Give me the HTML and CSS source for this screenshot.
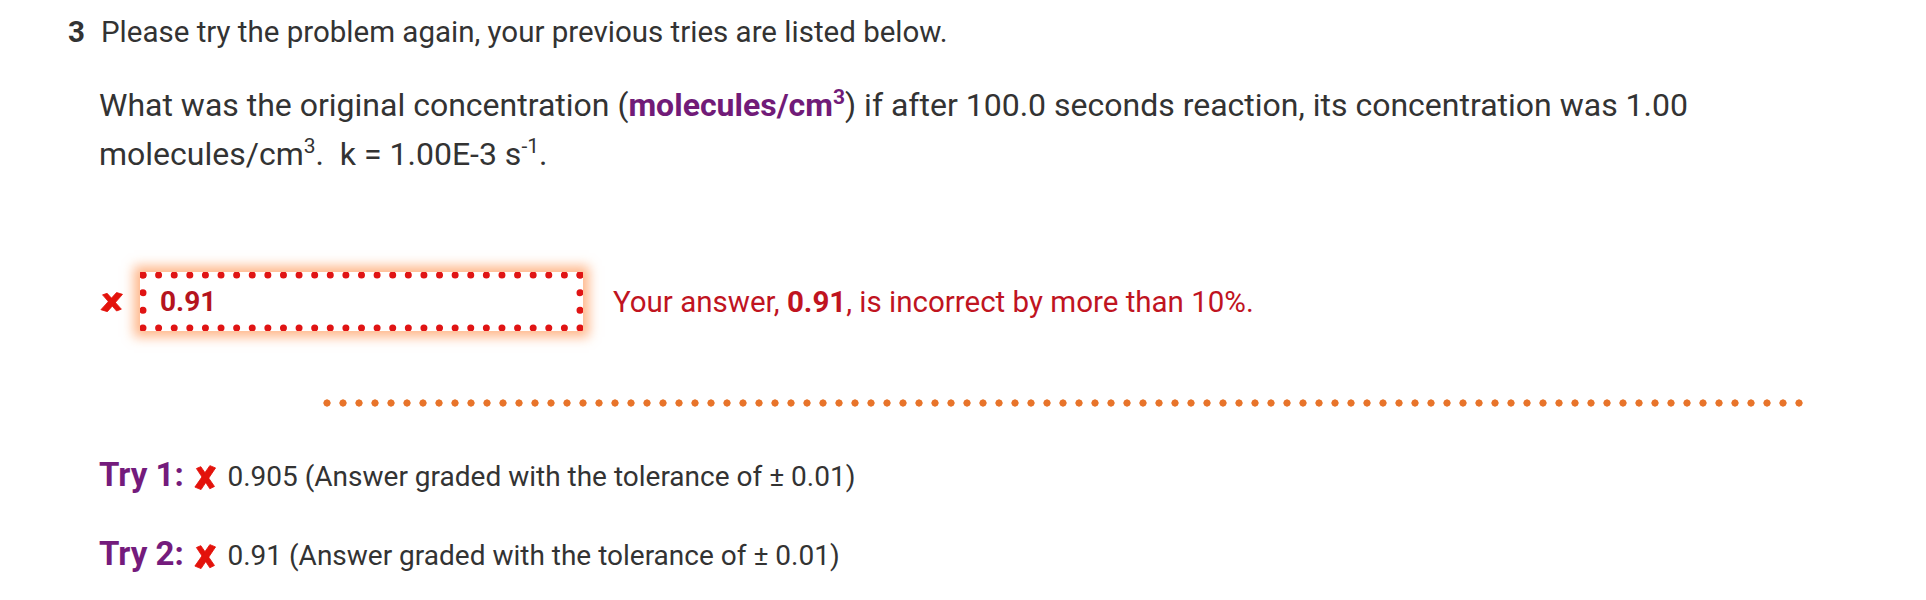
FILE: index.html
```html
<!DOCTYPE html>
<html lang="en">
<head>
<meta charset="utf-8">
<title>Problem 3</title>
<link rel="stylesheet" href="styles.css">
</head>
<body>
<div class="problem">
  <div class="header"><span class="num">3</span><span class="msg">Please try the problem again, your previous tries are listed below.</span></div>
  <div class="question">What was the original concentration (<b class="unit">molecules/cm<sup>3</sup></b>) if after 100.0 seconds reaction, its concentration was 1.00 molecules/cm<sup>3</sup>.&nbsp; k = 1.00E-3 s<sup>-1</sup>.</div>
  <div class="answer-row">
    <svg class="xicon big" width="23" height="20" viewBox="0 0 20 24" preserveAspectRatio="none" aria-hidden="true">
      <path d="M2.2 3.4 L6.2 1.6 L18.6 20.6 L14.4 22.8 Z"/>
      <path d="M14.4 0.6 L19.6 2.8 L6.4 23.6 L0.8 21.2 Z"/>
    </svg>
    <div class="answer-box">
      <svg class="dots" width="443" height="59" viewBox="0 0 443 59" aria-hidden="true">
        <line x1="3" y1="3" x2="440" y2="3" stroke-dasharray="0 15.607"/>
        <line x1="3" y1="56" x2="440" y2="56" stroke-dasharray="0 15.607"/>
        <line x1="3" y1="3" x2="3" y2="56" stroke-dasharray="0 17.667"/>
        <line x1="440" y1="3" x2="440" y2="56" stroke-dasharray="0 17.667"/>
      </svg>
      <span class="value">0.91</span>
    </div>
    <span class="feedback">Your answer, <b>0.91</b>, is incorrect by more than 10%.</span>
  </div>
  <div class="separator"></div>
  <div class="tries">
    <div class="try"><span class="label">Try 1:</span><svg class="xicon" width="22" height="25" viewBox="0 0 20 24" preserveAspectRatio="none" aria-hidden="true"><path d="M2.2 3.4 L6.2 1.6 L18.6 20.6 L14.4 22.8 Z"/><path d="M14.4 0.6 L19.6 2.8 L6.4 23.6 L0.8 21.2 Z"/></svg><span class="detail">0.905 (Answer graded with the tolerance of ± 0.01)</span></div>
    <div class="try"><span class="label">Try 2:</span><svg class="xicon" width="22" height="25" viewBox="0 0 20 24" preserveAspectRatio="none" aria-hidden="true"><path d="M2.2 3.4 L6.2 1.6 L18.6 20.6 L14.4 22.8 Z"/><path d="M14.4 0.6 L19.6 2.8 L6.4 23.6 L0.8 21.2 Z"/></svg><span class="detail">0.91 (Answer graded with the tolerance of ± 0.01)</span></div>
  </div>
</div>
</body>
</html>
```
FILE: styles.css
```css
html, body {
  margin: 0;
  padding: 0;
  background: #ffffff;
}
body {
  font-family: Roboto, "Liberation Sans", sans-serif;
  color: #333333;
}
.problem {
  padding-top: 15px;
}
.header {
  display: flex;
  align-items: baseline;
  padding-left: 68px;
  font-size: 29.5px;
  line-height: 34px;
}
.header .num {
  font-weight: 700;
  width: 33px;
}
.question {
  margin: 32px 0 0 99px;
  font-size: 32px;
  line-height: 49px;
  max-width: 1640px;
}
.question sup {
  font-size: 21px;
  line-height: 1;
  vertical-align: 12px;
}
.question .unit {
  color: #711b78;
  font-weight: 700;
}
.answer-row {
  display: flex;
  align-items: center;
  margin-top: 93px;
  padding-left: 100px;
}
.xicon path {
  fill: #e3120b;
  stroke: #e3120b;
  stroke-width: 0.8;
  stroke-linejoin: round;
}
.xicon.big {
  margin-right: 17px;
}
.answer-box {
  position: relative;
  width: 443px;
  height: 59px;
  box-sizing: border-box;
  display: flex;
  align-items: center;
  padding-left: 20px;
  background: #ffffff;
  box-shadow: 0 0 11px 6px rgba(255, 135, 60, 0.6);
}
.dots {
  position: absolute;
  left: 0;
  top: 0;
}
.dots line {
  stroke: #e01414;
  stroke-width: 7;
  stroke-linecap: round;
}
.value {
  font-size: 28px;
  font-weight: 700;
  color: #b5141e;
}
.feedback {
  margin-left: 30px;
  font-size: 29.5px;
  color: #c0141f;
}
.separator {
  margin: 68px 0 0 319px;
  width: 1486px;
  height: 8px;
  background-image: radial-gradient(circle, #e8742a 3.3px, rgba(232, 116, 42, 0) 3.9px);
  background-size: 16px 8px;
  background-repeat: repeat-x;
}
.tries {
  margin: 48px 0 0 99px;
  display: flex;
  flex-direction: column;
  gap: 39px;
}
.try {
  height: 40px;
  line-height: 40px;
  white-space: nowrap;
}
.try .label {
  display: inline-block;
  color: #741b7c;
  font-weight: 700;
  font-size: 33px;
  width: 94.5px;
}
.try .xicon {
  vertical-align: -4px;
  margin-right: 12px;
}
.try .detail {
  font-size: 28px;
}
```
